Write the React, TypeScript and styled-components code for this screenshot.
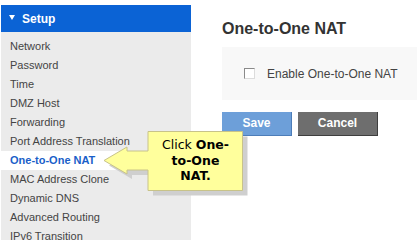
import styled, { createGlobalStyle } from "styled-components";

const Global = createGlobalStyle`
  html, body {
    margin: 0;
    padding: 0;
    background: #fff;
    font-family: "Liberation Sans", Arial, sans-serif;
  }
`;

const Page = styled.div`
  position: relative;
  display: flex;
  width: 417px;
  height: 240px;
  overflow: hidden;
  background: #fff;
`;

const Sidebar = styled.nav`
  width: 190px;
  margin: 5px 0 0 1px;
  background: #ebebeb;
  flex-shrink: 0;
`;

const SectionHead = styled.div`
  display: flex;
  align-items: center;
  gap: 7px;
  height: 27px;
  padding-left: 8px;
  background: #0b63d5;
  color: #fff;
  font-weight: bold;
  font-size: 12px;
  margin-bottom: 5px;
`;

const Caret = styled.span`
  width: 0;
  height: 0;
  border-left: 3.5px solid transparent;
  border-right: 3.5px solid transparent;
  border-top: 5px solid #fff;
  margin-top: -2px;
`;

const Item = styled.div<{ $active?: boolean }>`
  height: 19px;
  line-height: 19px;
  padding-left: 9px;
  font-size: 11px;
  color: ${(p) => (p.$active ? "#1a5fc9" : "#444")};
  font-weight: ${(p) => (p.$active ? "bold" : "normal")};
  background: ${(p) => (p.$active ? "#fff" : "transparent")};
  white-space: nowrap;
`;

const Main = styled.main`
  flex: 1;
  padding: 21px 0 0 31px;
`;

const Title = styled.h1`
  margin: 0;
  font-size: 16px;
  line-height: 16px;
  font-weight: bold;
  color: #333;
`;

const Panel = styled.div`
  display: flex;
  align-items: center;
  gap: 12px;
  margin-top: 10px;
  height: 53px;
  padding-left: 22px;
  background: #f8f8f8;
  font-size: 12px;
  color: #444;
`;

const Check = styled.span`
  box-sizing: border-box;
  width: 11px;
  height: 11px;
  background: #fff;
  border-top: 1px solid #8a8a8a;
  border-left: 1px solid #8a8a8a;
  border-right: 1px solid #dcdcdc;
  border-bottom: 1px solid #dcdcdc;
`;

const Actions = styled.div`
  display: flex;
  gap: 6px;
  margin-top: 12px;
`;

const Button = styled.div<{ $tone: "save" | "cancel" }>`
  box-sizing: border-box;
  width: ${(p) => (p.$tone === "save" ? "70px" : "80px")};
  height: 24px;
  line-height: 23px;
  text-align: center;
  font-size: 12px;
  font-weight: bold;
  color: #fff;
  background: ${(p) => (p.$tone === "save" ? "#6d9fd9" : "#6e6e6e")};
  border-right: 1px solid ${(p) => (p.$tone === "save" ? "#4d7db8" : "#3e3e3e")};
  border-bottom: 1px solid ${(p) => (p.$tone === "save" ? "#4d7db8" : "#3e3e3e")};
`;

const Callout = styled.div`
  position: absolute;
  left: 103px;
  top: 131px;
  width: 146px;
  height: 66px;
`;

const CalloutShape = styled.svg`
  position: absolute;
  left: 0;
  top: 0;
`;

const CalloutText = styled.div`
  position: absolute;
  left: 45px;
  top: 6px;
  width: 95px;
  text-align: center;
  font-family: "DejaVu Sans", Verdana, sans-serif;
  font-size: 12.5px;
  line-height: 15.5px;
  color: #000;
  & b {
    font-weight: bold;
  }
`;

const arrow =
  "M1 29.5 L24 16 L24 20 L45 20 L45 0.5 L139.5 0.5 L139.5 59.5 L45 59.5 L45 39 L24 39 L24 43 Z";

const items = [
  "Network",
  "Password",
  "Time",
  "DMZ Host",
  "Forwarding",
  "Port Address Translation",
  "One-to-One NAT",
  "MAC Address Clone",
  "Dynamic DNS",
  "Advanced Routing",
  "IPv6 Transition",
];

function App() {
  return (
    <Page>
      <Global />
      <Sidebar>
        <SectionHead>
          <Caret />
          Setup
        </SectionHead>
        {items.map((label) => (
          <Item key={label} $active={label === "One-to-One NAT"}>
            {label}
          </Item>
        ))}
      </Sidebar>
      <Main>
        <Title>One-to-One NAT</Title>
        <Panel>
          <Check />
          Enable One-to-One NAT
        </Panel>
        <Actions>
          <Button $tone="save">Save</Button>
          <Button $tone="cancel">Cancel</Button>
        </Actions>
      </Main>
      <Callout>
        <CalloutShape width="146" height="66" viewBox="0 0 146 66">
          <path d={arrow} transform="translate(5 5)" fill="#cfcfcf" />
          <path d={arrow} fill="#ffff9c" stroke="#c8c389" strokeWidth="1" />
        </CalloutShape>
        <CalloutText>
          Click <b>One-</b>
          <br />
          <b>to-One</b>
          <br />
          <b>NAT.</b>
        </CalloutText>
      </Callout>
    </Page>
  );
}

export default App;
